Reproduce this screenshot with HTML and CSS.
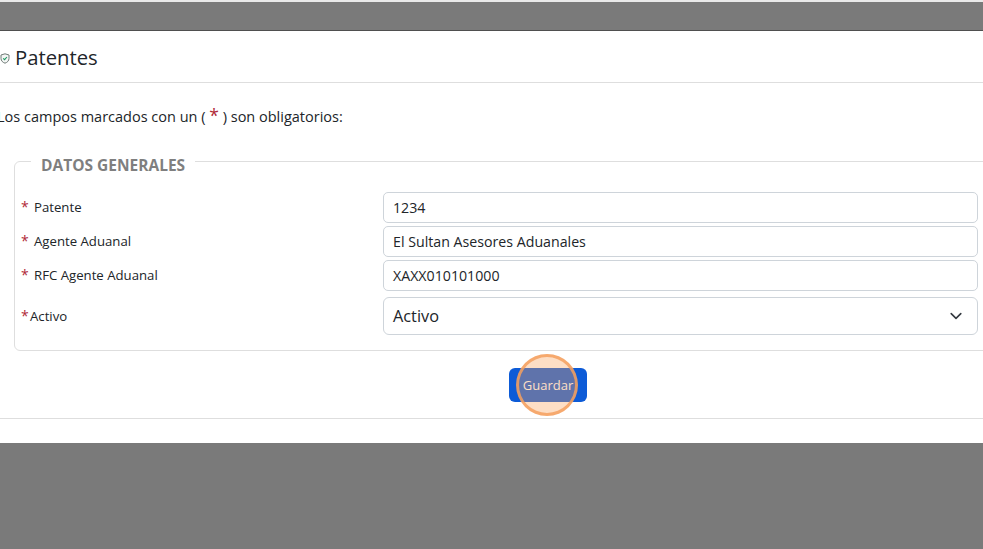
FILE: index.html
```html
<!DOCTYPE html>
<html lang="es">
<head>
<meta charset="utf-8">
<title>Patentes</title>
<link rel="stylesheet" href="styles.css">
</head>
<body>
<div class="top-strip"></div>
<div class="top-band"></div>
<main class="panel">
  <header class="panel-head">
    <svg class="shield" viewBox="0 0 10 11" width="10" height="11" aria-hidden="true">
      <path d="M5 .8 9 2v3.4c0 2.4-1.7 4-4 4.8-2.3-.8-4-2.4-4-4.8V2z" fill="#f4f6f5" stroke="#6f7a76" stroke-width="1"/>
      <path d="M3.2 5.3 4.6 6.7 6.9 4" fill="none" stroke="#1f9a62" stroke-width="1.1"/>
    </svg>
    <h1 class="title">Patentes</h1>
  </header>
  <p class="note">Los campos marcados con un ( <span class="req-big">*</span> ) son obligatorios:</p>
  <fieldset class="group">
    <legend class="group-title">DATOS GENERALES</legend>
    <div class="row">
      <label class="label"><span class="req">*</span><span class="label-text">Patente</span></label>
      <div class="input">1234</div>
    </div>
    <div class="row">
      <label class="label"><span class="req">*</span><span class="label-text">Agente Aduanal</span></label>
      <div class="input">El Sultan Asesores Aduanales</div>
    </div>
    <div class="row">
      <label class="label"><span class="req">*</span><span class="label-text">RFC Agente Aduanal</span></label>
      <div class="input">XAXX010101000</div>
    </div>
    <div class="row row-select">
      <label class="label label-select"><span class="req">*</span><span class="label-tight">Activo</span></label>
      <div class="select">
        <span>Activo</span>
        <svg viewBox="0 0 16 16" width="16" height="16" aria-hidden="true"><path d="M2 5l6 6 6-6" fill="none" stroke="#343a40" stroke-width="2" stroke-linecap="round" stroke-linejoin="round" transform="translate(1.6 1.6) scale(.8)"/></svg>
      </div>
    </div>
  </fieldset>
  <div class="actions">
    <button class="btn" type="button">Guardar</button>
    <span class="spot"></span>
  </div>
</main>
</body>
</html>
```
FILE: styles.css
```css
* { box-sizing: border-box; }
html, body { margin: 0; padding: 0; }
body {
  width: 983px;
  height: 549px;
  overflow: hidden;
  background: #7a7a7a;
  font-family: "Open Sans", "Liberation Sans", sans-serif;
  color: #212529;
}
.top-strip { height: 2px; background: #e9e9e9; }
.top-band { height: 29px; background: #7a7a7a; border-bottom: 1px solid #4f4f4f; }
.panel { height: 412px; background: #fff; overflow: hidden; }
.panel-head {
  display: flex;
  align-items: center;
  height: 52px;
  border-bottom: 1px solid #dedede;
  padding-left: 0;
}
.shield { margin-left: 0; margin-right: 5px; margin-top: 3px; flex: none; }
.title { margin: 1px 0 0; font-size: 20.25px; font-weight: 400; line-height: 26px; color: #212529; }
.note { margin: 22px 0 0 -3px; font-size: 14.5px; line-height: 20px; color: #212529; }
.req-big { color: #b02a37; font-size: 17.5px; line-height: 20px; }
.group {
  margin: 20px -20px 0 14px;
  padding: 17px 24px 15px 6px;
  border: 1px solid #dedede;
  border-radius: 6px;
  min-width: 0;
}
.group-title {
  margin-left: 10px;
  padding: 8px 10px 0;
  font-size: 15.5px;
  font-weight: 700;
  line-height: 20px;
  color: #7f7f7f;
}
.row { display: flex; align-items: center; height: 31px; margin-bottom: 3px; }
.row-select { height: 38px; margin-top: 6px; margin-bottom: 0; }
.label { width: 362px; flex: none; padding-bottom: 2px; font-size: 13.2px; line-height: 18px; color: #212529; display: flex; align-items: center; }
.label-select { padding-bottom: 0; }
.req { color: #b02a37; font-size: 14px; width: 13px; flex: none; }
.label-text { margin-left: 0; }
.label-tight { margin-left: -4px; }
.input {
  flex: 1;
  height: 31px;
  border: 1px solid #ced4da;
  border-radius: 5px;
  padding: 0 9px;
  font-size: 14.2px;
  line-height: 29px;
  color: #212529;
}
.select {
  flex: 1;
  height: 38px;
  border: 1px solid #ced4da;
  border-radius: 6px;
  padding: 0 13px 0 9px;
  font-size: 16.3px;
  display: flex;
  align-items: center;
  justify-content: space-between;
  color: #212529;
}
.actions {
  position: relative;
  display: flex;
  justify-content: center;
  align-items: center;
  height: 68px;
  padding-left: 113px;
  border-bottom: 1px solid #dedede;
}
.btn {
  width: 78px;
  height: 34px;
  background: #0d5bd7;
  border: 0;
  border-radius: 6px;
  color: #fff;
  font: 400 13px "Open Sans", "Liberation Sans", sans-serif;
  padding: 0;
}
.spot {
  position: absolute;
  left: 516px;
  top: 3px;
  width: 62px;
  height: 62px;
  border-radius: 50%;
  background: rgba(250, 160, 90, .35);
  border: 3px solid rgba(245, 160, 95, .85);
}
```
